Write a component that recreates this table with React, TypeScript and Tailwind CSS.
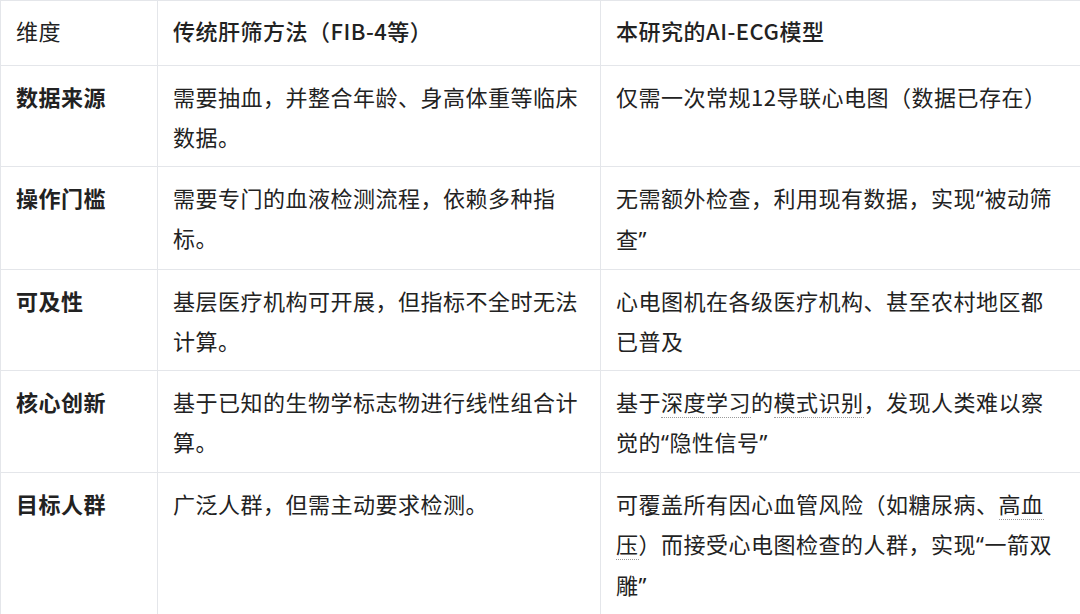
import React from "react";

const U = ({ children }: { children: React.ReactNode }) => (
  <span className="border-b border-dotted border-[#9a9a9a]">{children}</span>
);

const Q = ({ children }: { children: React.ReactNode }) => (
  <span style={{ fontFamily: '"Noto Sans", sans-serif' }}>{children}</span>
);

type Row = { k: string; a: React.ReactNode; b: React.ReactNode };

const rows: Row[] = [
  {
    k: "数据来源",
    a: (
      <>
        需要抽血，并整合年龄、身高体重等临床
        <br />
        数据。
      </>
    ),
    b: <>仅需一次常规12导联心电图（数据已存在）</>,
  },
  {
    k: "操作门槛",
    a: (
      <>
        需要专门的血液检测流程，依赖多种指
        <br />
        标。
      </>
    ),
    b: (
      <>
        无需额外检查，利用现有数据，实现<Q>“</Q>被动筛
        <br />
        查<Q>”</Q>
      </>
    ),
  },
  {
    k: "可及性",
    a: (
      <>
        基层医疗机构可开展，但指标不全时无法
        <br />
        计算。
      </>
    ),
    b: (
      <>
        心电图机在各级医疗机构、甚至农村地区都
        <br />
        已普及
      </>
    ),
  },
  {
    k: "核心创新",
    a: (
      <>
        基于已知的生物学标志物进行线性组合计
        <br />
        算。
      </>
    ),
    b: (
      <>
        基于<U>深度学习</U>的<U>模式识别</U>，发现人类难以察
        <br />
        觉的<Q>“</Q>隐性信号<Q>”</Q>
      </>
    ),
  },
  {
    k: "目标人群",
    a: <>广泛人群，但需主动要求检测。</>,
    b: (
      <>
        可覆盖所有因心血管风险（如糖尿病、<U>高血</U>
        <br />
        <U>压</U>）而接受心电图检查的人群，实现<Q>“</Q>一箭双
        <br />
        雕<Q>”</Q>
      </>
    ),
  },
];

export default function App() {
  return (
    <div
      className="w-[1080px] h-[614px] bg-white text-[#222222] overflow-hidden"
      style={{ fontFamily: '"Noto Sans CJK SC", "Noto Sans", sans-serif' }}
    >
      <table className="w-[1080px] border-collapse table-fixed text-[22px] leading-[40px] tracking-[0.5px]">
        <colgroup>
          <col className="w-[157px]" />
          <col className="w-[443px]" />
          <col className="w-[480px]" />
        </colgroup>
        <thead>
          <tr>
            <th className="border border-[#e4e6ea] pl-[15px] pr-[14px] pt-[9px] pb-[15px] text-left align-top font-normal whitespace-nowrap">
              维度
            </th>
            <th className="border border-[#e4e6ea] pl-[15px] pr-[14px] pt-[9px] pb-[15px] text-left align-top font-medium whitespace-nowrap">
              传统肝筛方法（FIB-4等）
            </th>
            <th className="border border-[#e4e6ea] pl-[15px] pr-[14px] pt-[9px] pb-[15px] text-left align-top font-medium whitespace-nowrap">
              本研究的AI-ECG模型
            </th>
          </tr>
        </thead>
        <tbody>
          {rows.map((r) => (
            <tr key={r.k}>
              <td className="border border-[#e4e6ea] pl-[15px] pr-[8px] pt-[10px] pb-[10px] align-top font-bold whitespace-nowrap">
                {r.k}
              </td>
              <td className="border border-[#e4e6ea] pl-[15px] pr-[8px] pt-[10px] pb-[10px] align-top whitespace-nowrap">
                {r.a}
              </td>
              <td className="border border-[#e4e6ea] pl-[15px] pr-[8px] pt-[10px] pb-[10px] align-top whitespace-nowrap">
                {r.b}
              </td>
            </tr>
          ))}
        </tbody>
      </table>
    </div>
  );
}
